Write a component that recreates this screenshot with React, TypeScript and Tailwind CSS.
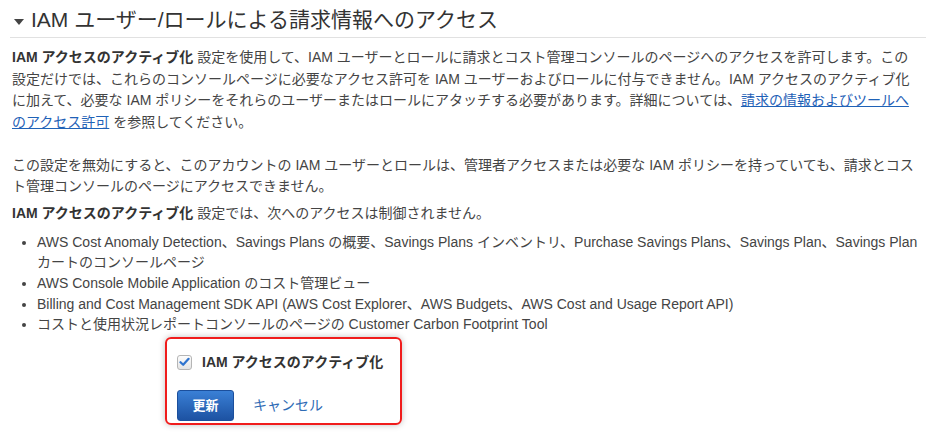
const font = { fontFamily: '"Liberation Sans", "Noto Sans CJK JP", sans-serif' };

const bullets = [
  "AWS Cost Anomaly Detection、Savings Plans の概要、Savings Plans インベントリ、Purchase Savings Plans、Savings Plan、Savings Plan カートのコンソールページ",
  "AWS Console Mobile Application のコスト管理ビュー",
  "Billing and Cost Management SDK API (AWS Cost Explorer、AWS Budgets、AWS Cost and Usage Report API)",
  "コストと使用状況レポートコンソールのページの Customer Carbon Footprint Tool",
];

const CheckMark = () => (
  <span className="flex h-[15px] w-[15px] items-center justify-center rounded-[3px] border border-[#b5b5b5] bg-gradient-to-b from-[#fdfdfd] to-[#e4e4e4]">
    <svg width="11" height="10" viewBox="0 0 11 10">
      <path d="M1.5 5.2 L4.2 7.8 L9.6 1.8" fill="none" stroke="#2f74cf" strokeWidth="2.2" strokeLinecap="round" strokeLinejoin="round" />
    </svg>
  </span>
);

export default function App() {
  return (
    <div className="h-[438px] w-[936px] overflow-hidden bg-white px-[10px] pt-[6px] text-[14px] leading-[21px] text-[#444]" style={font}>
      <div className="flex items-center border-b border-[#e1e1e1] pb-[3px]">
        <svg width="20" height="28" viewBox="0 0 20 28" className="mr-[1px]">
          <path d="M4 13 L14 13 L9 19 Z" fill="#444" />
        </svg>
        <h1 className="text-[21px] leading-[28px] font-normal text-[#333]">IAM ユーザー/ロールによる請求情報へのアクセス</h1>
      </div>

      <div className="px-[2px] pt-[9px] pr-[4px]">
        <p className="mb-[21px] leading-[21.7px]">
          <b className="text-[#333]">IAM アクセスのアクティブ化</b> 設定を使用して、IAM ユーザーとロールに請求とコスト管理コンソールのページへのアクセスを許可します。この設定だけでは、これらのコンソールページに必要なアクセス許可を IAM ユーザーおよびロールに付与できません。IAM アクセスのアクティブ化に加えて、必要な IAM ポリシーをそれらのユーザーまたはロールにアタッチする必要があります。詳細については、
          <a className="text-[#1f62b7] underline">請求の情報およびツールへのアクセス許可</a> を参照してください。
        </p>
        <p className="mb-[6px]">
          この設定を無効にすると、このアカウントの IAM ユーザーとロールは、管理者アクセスまたは必要な IAM ポリシーを持っていても、請求とコスト管理コンソールのページにアクセスできません。
        </p>
        <p className="mb-[8px]">
          <b className="text-[#333]">IAM アクセスのアクティブ化</b> 設定では、次へのアクセスは制御されません。
        </p>
        <ul className="list-disc pl-[25px] leading-[20.6px]">
          {bullets.map((b) => (
            <li key={b}>{b}</li>
          ))}
        </ul>
      </div>

      <div className="ml-[155px] mt-[2px] w-[237px] rounded-[6px] border-2 border-[#f01c1c] px-[10px] pt-[13px] pb-[2px] shadow-[0_0_6px_rgba(0,0,0,0.25)]">
        <label className="flex items-center gap-[10px]">
          <CheckMark />
          <span className="font-bold text-[#333]">IAM アクセスのアクティブ化</span>
        </label>
        <div className="mt-[17px] flex items-center gap-[19px]">
          <button className="h-[31px] w-[57px] rounded-[3px] border border-[#1b4f9c] bg-gradient-to-b from-[#3a80d6] to-[#1d52a2] text-[13px] font-bold text-white">
            更新
          </button>
          <a className="text-[#2e6bb5]">キャンセル</a>
        </div>
      </div>
    </div>
  );
}
